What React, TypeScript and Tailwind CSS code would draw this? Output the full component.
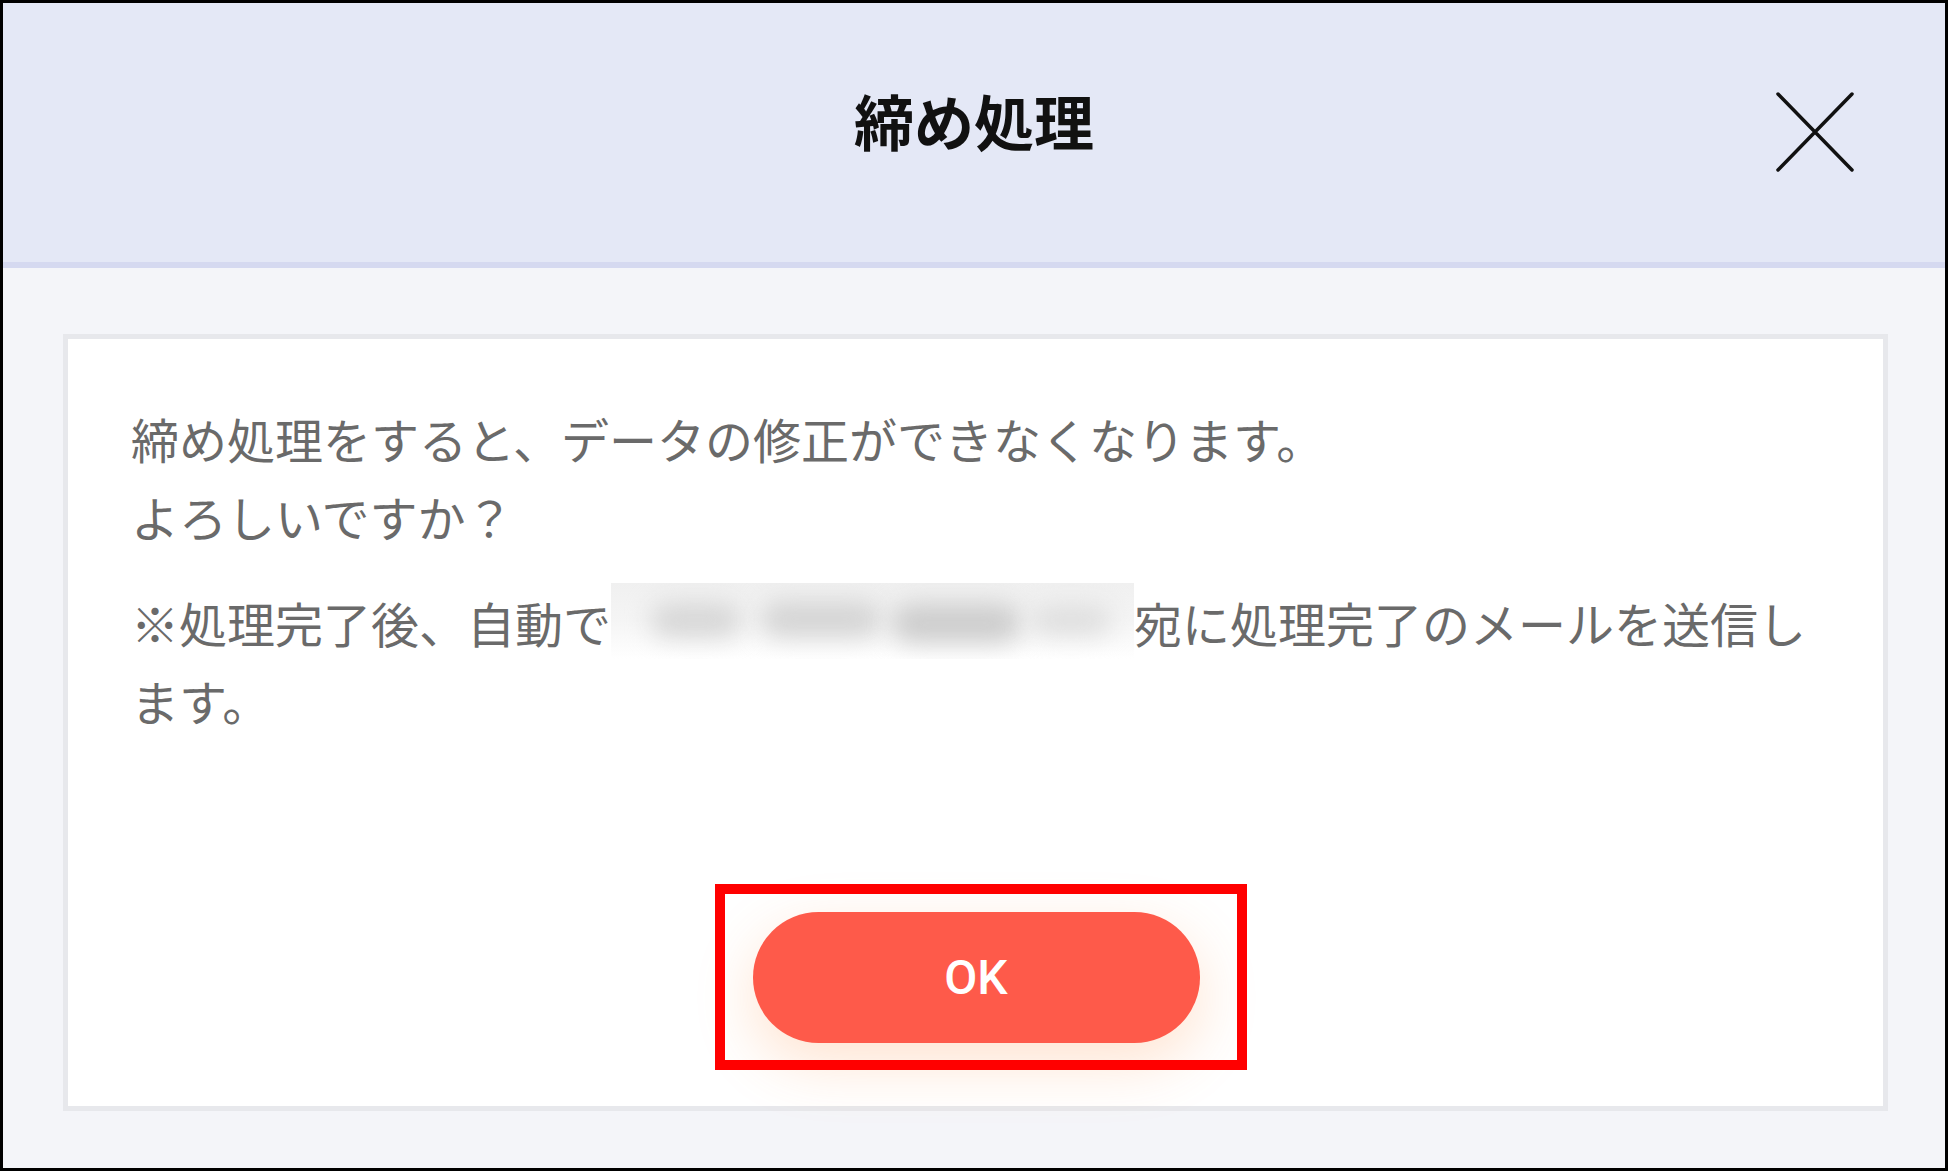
import React from 'react';

const jp = { fontFamily: '"Noto Sans CJK JP", "Noto Sans", sans-serif' };

function CloseIcon() {
  return (
    <svg width="80" height="82" viewBox="0 0 80 82" fill="none">
      <path d="M3 3 L77 79 M77 3 L3 79" stroke="#111" strokeWidth="3.5" strokeLinecap="round" />
    </svg>
  );
}

// blurred-out recipient address
function Redacted() {
  return (
    <span className="relative inline-block w-[523px] h-[76px] align-top overflow-hidden bg-gradient-to-b from-[#f0f0f0] via-[#f5f5f5] to-white">
      <span className="absolute left-[40px] top-[20px] w-[90px] h-[34px] rounded-full bg-[#d6d6d6] blur-[12px]" />
      <span className="absolute left-[150px] top-[18px] w-[120px] h-[36px] rounded-full bg-[#d4d4d4] blur-[12px]" />
      <span className="absolute left-[280px] top-[20px] w-[130px] h-[40px] rounded-full bg-[#cdcdcd] blur-[12px]" />
      <span className="absolute left-[420px] top-[22px] w-[80px] h-[30px] rounded-full bg-[#dedede] blur-[12px]" />
    </span>
  );
}

export default function App() {
  return (
    <div className="w-[1948px] h-[1171px] border-[3px] border-black flex flex-col bg-[#f4f5f9]" style={jp}>
      {/* Header */}
      <div className="relative h-[265px] shrink-0 bg-[#e4e8f6] border-b-[6px] border-[#d5d9f0] flex items-center justify-center">
        <h1 className="text-[60px] font-bold text-[#111] leading-none -mt-[26px]">締め処理</h1>
        <button className="absolute right-[90px] top-[88px]">
          <CloseIcon />
        </button>
      </div>

      {/* Body */}
      <div className="flex-1 pl-[60px] pr-[57px] pt-[66px] pb-[57px] flex">
        <div className="flex-1 bg-white border-[5px] border-[#e7e8ec] flex flex-col pl-[63px] pr-[62px] pt-[60px] pb-[63px]">
          <div className="text-[48px] leading-[78px] text-[#6a6a6a]">
            <p>締め処理をすると、データの修正ができなくなります。</p>
            <p>よろしいですか？</p>
            <p className="mt-[28px] whitespace-nowrap">
              <span>※処理完了後、自動で</span>
              <Redacted />
              <span>宛に処理完了のメールを送信し</span>
            </p>
            <p>ます。</p>
          </div>

          <div className="mt-auto flex justify-center">
            <div className="relative">
              <button
                className="w-[447px] h-[131px] rounded-full bg-[#fe5a4a] text-white text-[48px] font-medium shadow-[0_20px_60px_rgba(255,140,60,0.24)]"
                style={{ fontFamily: 'Roboto, "Noto Sans", sans-serif' }}
              >
                OK
              </button>
              <div className="absolute -left-[38px] -right-[47px] -top-[28px] -bottom-[27px] border-[10px] border-[#ff0000] pointer-events-none" />
            </div>
          </div>
        </div>
      </div>
    </div>
  );
}
